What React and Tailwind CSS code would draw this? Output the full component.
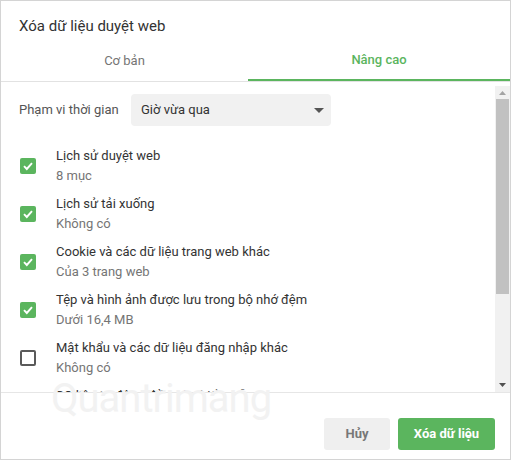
import React from 'react';

const items = [
  { title: 'Lịch sử duyệt web', sub: '8 mục', on: true },
  { title: 'Lịch sử tải xuống', sub: 'Không có', on: true },
  { title: 'Cookie và các dữ liệu trang web khác', sub: 'Của 3 trang web', on: true },
  { title: 'Tệp và hình ảnh được lưu trong bộ nhớ đệm', sub: 'Dưới 16,4 MB', on: true },
  { title: 'Mật khẩu và các dữ liệu đăng nhập khác', sub: 'Không có', on: false },
  { title: 'Dữ liệu tự động điền vào biểu mẫu', sub: 'Không có', on: false },
];

function Checkbox({ on }) {
  if (on) {
    return (
      <div className="w-[16px] h-[16px] rounded-[2px] bg-[#5bb55e] flex items-center justify-center shrink-0">
        <svg width="12" height="12" viewBox="0 0 12 12" fill="none">
          <path d="M2 6.2 L4.8 9 L10 3.2" stroke="white" strokeWidth="1.9" />
        </svg>
      </div>
    );
  }
  return <div className="w-[16px] h-[16px] rounded-[2px] border-2 border-[#5a5a5a] shrink-0" />;
}

export default function App() {
  return (
    <div
      className="relative w-[511px] h-[460px] border border-[#d4d4d4] bg-white flex flex-col overflow-hidden"
      style={{ fontFamily: 'Roboto, "Liberation Sans", sans-serif' }}
    >
      <h1 className="pt-[15px] pl-[18px] text-[15px] leading-[20px] text-[#333]">Xóa dữ liệu duyệt web</h1>

      {/* tabs */}
      <div className="mt-[5px] flex border-b border-[#e2e2e2] text-[13px]">
        <div className="w-[247px] h-[40px] flex items-center justify-center text-[#757575]">Cơ bản</div>
        <div className="flex-1 h-[40px] flex items-center justify-center font-medium text-[#5bb55e] border-b-2 border-[#5bb55e] -mb-px">
          Nâng cao
        </div>
      </div>

      {/* scrolling body */}
      <div className="h-[311px] flex border-b border-[#e6e6e6]">
        <div className="flex-1 overflow-hidden">
          <div className="pt-[12px] pl-[18px] flex items-center">
            <span className="w-[112px] text-[13px] text-[#555]">Phạm vi thời gian</span>
            <div className="w-[200px] h-[32px] rounded-[4px] bg-[#f1f1f1] flex items-center justify-between pl-[10px] pr-[7px]">
              <span className="text-[13px] text-[#333]">Giờ vừa qua</span>
              <svg width="10" height="5" viewBox="0 0 10 5">
                <path d="M0 0 H10 L5 5 Z" fill="#555" />
              </svg>
            </div>
          </div>

          <div className="mt-[16px] flex flex-col">
            {items.map((it) => (
              <div key={it.title} className="h-[48px] pl-[19px] flex items-center gap-[20px]">
                <Checkbox on={it.on} />
                <div className="text-[13px] leading-[20px]">
                  <div className="text-[#333]">{it.title}</div>
                  <div className="text-[#757575]">{it.sub}</div>
                </div>
              </div>
            ))}
          </div>
        </div>

        {/* scrollbar */}
        <div className="w-[15px] mt-[4px] bg-[#f1f1f1] flex flex-col items-center">
          <div className="h-[13px] flex items-center justify-center">
            <svg width="7" height="4" viewBox="0 0 7 4">
              <path d="M0 4 L3.5 0 L7 4 Z" fill="#a3a3a3" />
            </svg>
          </div>
          <div className="w-[13px] h-[195px] bg-[#c1c1c1]" />
          <div className="flex-1" />
          <div className="h-[14px] flex items-center justify-center">
            <svg width="7" height="4" viewBox="0 0 7 4">
              <path d="M0 0 L7 0 L3.5 4 Z" fill="#505050" />
            </svg>
          </div>
        </div>
      </div>

      {/* footer */}
      <div className="flex-1 flex items-start justify-end gap-[8px] pt-[25px] pr-[15px]">
        <button className="w-[66px] h-[32px] rounded-[3px] bg-[#efefef] text-[13px] font-bold text-[#777]">Hủy</button>
        <button className="w-[97px] h-[32px] rounded-[3px] bg-[#5bb55e] text-[13px] font-bold text-white">Xóa dữ liệu</button>
      </div>

      {/* watermark */}
      <div className="absolute left-[50px] top-[378px] text-[40px] leading-[40px] text-[#f2f2f2] tracking-[-1px] pointer-events-none select-none">
        Quantrimang
      </div>
    </div>
  );
}
